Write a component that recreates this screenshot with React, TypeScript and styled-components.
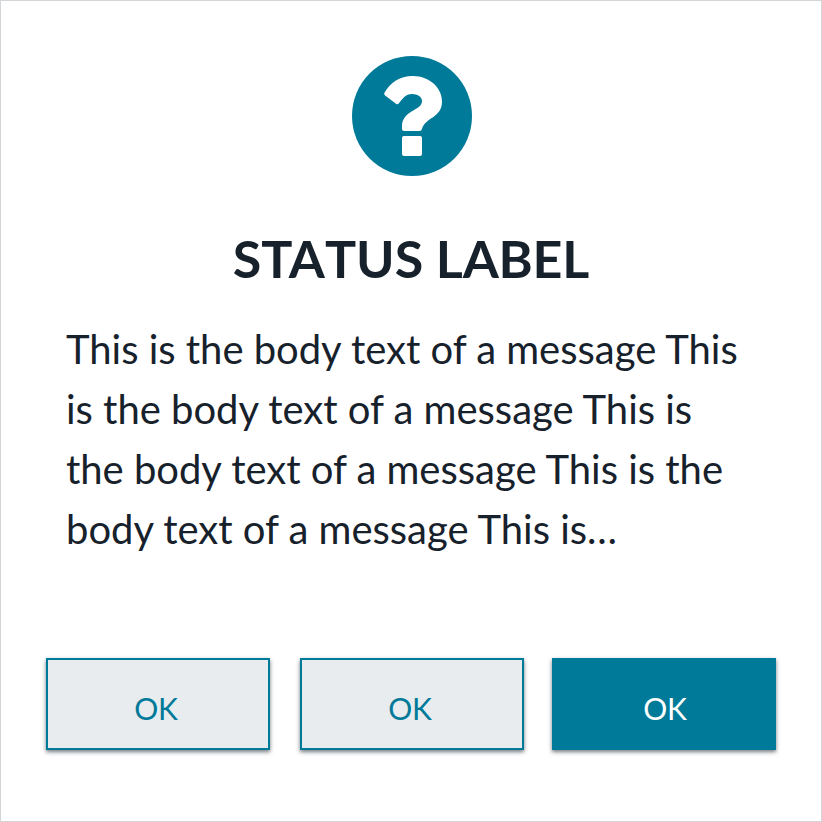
import React from "react";
import styled, { createGlobalStyle } from "styled-components";

const GlobalStyle = createGlobalStyle`
  * { box-sizing: border-box; }
  body { margin: 0; background: #fff; font-family: Lato, sans-serif; color: #17212b; }
`;

const Dialog = styled.main`
  display: flex;
  flex-direction: column;
  width: 822px;
  height: 822px;
  padding: 55px 45px 71px;
  border: 1px solid #d3d6d9;
  background: #fff;
`;

const StatusIcon = styled.svg`
  display: block;
  width: 120px;
  height: 120px;
  margin: 0 auto;
  transform: translateX(1px);
`;

const Title = styled.h1`
  margin: 50px 0 0;
  font-size: 52px;
  line-height: 64px;
  font-weight: 700;
  text-align: center;
`;

const Kern = styled.span<{ $space: number }>`
  letter-spacing: ${(p) => p.$space}px;
`;

const Message = styled.p`
  margin: 29px 20px 0;
  font-size: 40px;
  line-height: 60px;
  letter-spacing: -0.02px;
`;

const Actions = styled.footer`
  display: grid;
  grid-template-columns: 224px 224px 224px;
  column-gap: 30px;
  margin-top: auto;
`;

const Button = styled.button<{ $primary?: boolean }>`
  width: 224px;
  height: 92px;
  margin-left: ${(p) => (p.$primary ? "-2px" : "0")};
  padding: ${(p) => (p.$primary ? "8px 0 0 2px" : "8px 4px 0 0")};
  border: 2px solid #007a99;
  background: ${(p) => (p.$primary ? "#007a99" : "#e8ecef")};
  color: ${(p) => (p.$primary ? "#fff" : "#007a99")};
  font: 400 30px Lato, sans-serif;
  letter-spacing: -0.2px;
  box-shadow: 0 2px 4px rgba(23, 33, 43, 0.6);
`;

export default function App() {
  return (
    <>
      <GlobalStyle />
      <Dialog>
        <StatusIcon viewBox="0 0 120 120" aria-hidden="true">
          <circle cx="60" cy="60" r="60" fill="#007a99" />
          <path
            fill="#fff"
            d="M32.6 36.6C38 27 47 20 61 20C76.5 20 90 31 90 45.5C90 62 73 61.5 70 73Q69.4 75 67.5 75H52Q50 75 50 73V70.5C50 54 70 55 70 45C70 41 66 38 60 38C53.5 38 50.5 43 46.8 47.5Q45.5 49 44 47.8L32.8 39.3Q31.6 38.2 32.6 36.6Z"
          />
          <rect x="50" y="80" width="20" height="20" rx="2" fill="#fff" />
        </StatusIcon>
        <Title>
          <Kern $space={-0.05}>STA</Kern>TUS <Kern $space={-0.2}>LABEL</Kern>
        </Title>
        <Message>
          This is the body text of a message This<br />
          is the body text of a message This is<br />
          the body text of a message This is the<br />
          body text of a message This is…
        </Message>
        <Actions>
          <Button>OK</Button>
          <Button>OK</Button>
          <Button $primary>OK</Button>
        </Actions>
      </Dialog>
    </>
  );
}
